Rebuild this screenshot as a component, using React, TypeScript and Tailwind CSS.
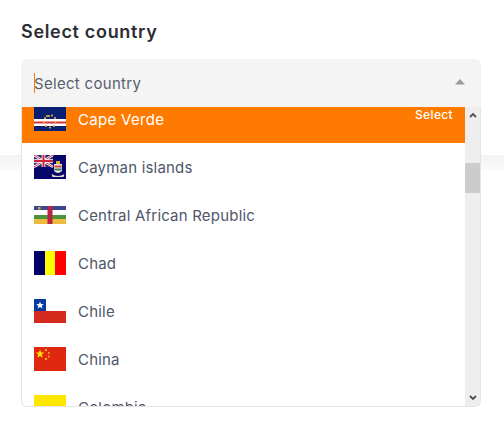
const font = { fontFamily: 'Inter, "Noto Sans", sans-serif' };

function Flag({ children }: { children: React.ReactNode }) {
  return (
    <svg width="32" height="24" viewBox="0 0 32 24" className="shrink-0 block">
      {children}
    </svg>
  );
}

const capeVerde = (
  <Flag>
    <rect width="32" height="24" fill="#0a1f73" />
    <rect y="12" width="32" height="7" fill="#fff" />
    <rect y="14.5" width="32" height="2" fill="#d5323c" />
    {[[15, 9], [18, 8.5], [21, 11], [21.5, 15], [20, 19], [16, 20.5], [12, 19], [10, 15], [11, 11], [13, 9]].map(([x, y], i) => (
      <rect key={i} x={x - 0.9} y={y - 0.9} width="1.8" height="1.8" fill="#e0b83c" />
    ))}
  </Flag>
);

const cayman = (
  <Flag>
    <rect width="32" height="24" fill="#06066b" />
    <rect width="19" height="12" fill="#2b2a75" />
    <path d="M0 0L19 12M19 0L0 12" stroke="#fff" strokeWidth="2.4" />
    <path d="M0 0L19 12M19 0L0 12" stroke="#d0203c" strokeWidth="0.9" />
    <path d="M9.5 0V12M0 6H19" stroke="#fff" strokeWidth="3.6" />
    <path d="M9.5 0V12M0 6H19" stroke="#d0203c" strokeWidth="2" />
    <rect x="22" y="6" width="4" height="3" fill="#d8b04a" />
    <path d="M20 9h8v7q-4 4-8 0z" fill="#e9e6d6" />
    <rect x="20.5" y="10.5" width="7" height="2" fill="#c94a44" />
    <rect x="20.5" y="13.5" width="7" height="2" fill="#3d7f6e" />
    <path d="M17.5 19q6.500 4 13 0l-1 3h-11z" fill="#e8dfc0" />
  </Flag>
);

const car = (
  <Flag>
    <rect y="3" width="32" height="4" fill="#3b4590" />
    <rect y="7" width="32" height="5" fill="#fff" />
    <rect y="12" width="32" height="4" fill="#4d9440" />
    <rect y="16" width="32" height="5" fill="#eeba3f" />
    <rect x="13.500" y="3" width="5" height="18" fill="#b9233f" />
    <rect x="4" y="4" width="2.500" height="2.500" fill="#c9a83c" />
  </Flag>
);

const chad = (
  <Flag>
    <rect width="11" height="24" fill="#010066" />
    <rect x="11" width="11" height="24" fill="#ffff00" />
    <rect x="21" width="11" height="24" fill="#ff0000" />
  </Flag>
);

const chile = (
  <Flag>
    <rect width="32" height="12" fill="#fff" />
    <rect width="12" height="12" fill="#0b3aa0" />
    <path d="M6 2.500l1 2.600 2.800.1-2.200 1.700.8 2.700L6 8.100 3.600 9.600l.8-2.700-2.200-1.700 2.800-.1z" fill="#fff" />
    <rect y="12" width="32" height="12" fill="#d52b1e" />
  </Flag>
);

const china = (
  <Flag>
    <rect width="32" height="24" fill="#de2910" />
    <path d="M6 2.500l1.100 3 3.200.1-2.500 2 .9 3.100L6 8.900 3.300 10.700l.9-3.100-2.500-2 3.200-.1z" fill="#ffde00" />
    <rect x="11" y="2" width="2" height="2" fill="#f5a623" />
    <rect x="14" y="5" width="1.500" height="2" fill="#f5a623" />
    <rect x="14" y="8.500" width="1.500" height="2" fill="#f5a623" />
    <rect x="11" y="11" width="2" height="2" fill="#f5a623" />
  </Flag>
);

const colombia = (
  <Flag>
    <rect width="32" height="12" fill="#ffe600" />
    <rect y="12" width="32" height="6" fill="#003893" />
    <rect y="18" width="32" height="6" fill="#ce1126" />
  </Flag>
);

const rows = [
  { name: 'Cayman islands', flag: cayman },
  { name: 'Central African Republic', flag: car },
  { name: 'Chad', flag: chad },
  { name: 'Chile', flag: chile },
  { name: 'China', flag: china },
  { name: 'Colombia', flag: colombia },
];

export default function App() {
  return (
    <div className="relative w-[504px] h-[440px] overflow-hidden bg-white" style={font}>
      <div className="pt-[20px] pl-[21px] pr-[23px]">
        <h1 className="text-[18px] leading-[24px] font-semibold tracking-[0.68px] text-[#2c2d33]">Select country</h1>
        <div className="mt-[15px] h-[48px] rounded-t-[6px] bg-[#f4f4f4] flex items-center pl-[13px] pr-[16px] relative">
          <span className="absolute left-[13px] top-[14px] w-px h-[20px] bg-[#ff7a00]" />
          <span className="text-[15px] tracking-[0.3px] mt-[2px] text-[#5a5f6e] flex-1">Select country</span>
          <svg width="10" height="6" viewBox="0 0 10 6" className="block -mt-[3px]">
            <path d="M5 0L10 5.500H0z" fill="#9a9a9a" />
          </svg>
        </div>
      </div>
      <div className="mt-[48px] h-[16px] bg-gradient-to-b from-[#f3f3f3] to-[#fbfbfb]" />

      <div className="absolute left-[21px] top-[107px] w-[460px] h-[300px] border border-t-0 border-[#e5e5e5] rounded-b-[6px] bg-white flex overflow-hidden">
        <div className="flex-1 overflow-hidden">
          <div className="relative h-[48px] -mt-[12px] bg-[#ff7a00] flex items-center pl-[12px] gap-[12px]">
            {capeVerde}
            <span className="text-[15px] mt-[2px] tracking-[0.3px] text-white">Cape Verde</span>
            <span className="absolute right-[12px] top-[11px] text-[12px] leading-[18px] tracking-[0.35px] font-medium text-white">Select</span>
          </div>
          {rows.map((r) => (
            <div key={r.name} className="h-[48px] flex items-center pl-[12px] gap-[12px]">
              {r.flag}
              <span className="text-[15px] mt-[2px] tracking-[0.2px] text-[#50566a] whitespace-nowrap">{r.name}</span>
            </div>
          ))}
        </div>
        <div className="w-[15px] shrink-0 bg-[#eeeeee] flex flex-col items-center justify-between py-[5px]">
          <svg width="8" height="6" viewBox="0 0 8 6" className="block">
            <path d="M1 5L4 2l3 3" fill="none" stroke="#505050" strokeWidth="1.800" />
          </svg>
          <svg width="8" height="6" viewBox="0 0 8 6" className="block">
            <path d="M1 1l3 3 3-3" fill="none" stroke="#505050" strokeWidth="1.800" />
          </svg>
        </div>
        <div className="absolute right-0 top-[56px] w-[15px] h-[30px] bg-[#cccccc]" />
      </div>
    </div>
  );
}
